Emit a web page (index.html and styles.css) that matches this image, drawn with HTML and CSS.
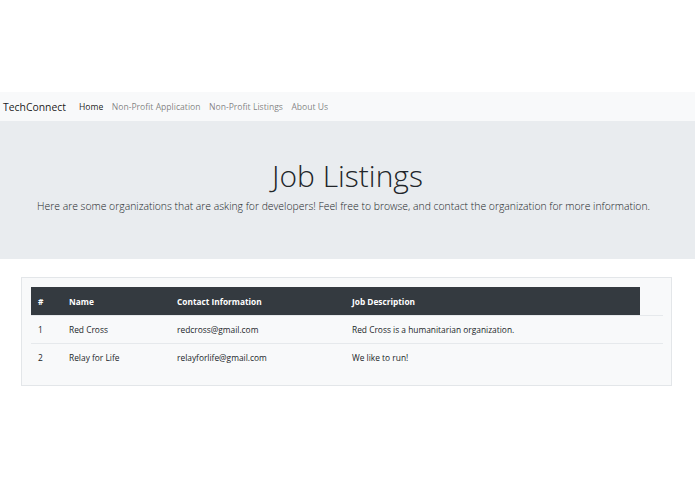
FILE: index.html
```html
<!DOCTYPE html>
<html lang="en">
<head>
<meta charset="utf-8">
<title>TechConnect - Job Listings</title>
<link rel="stylesheet" href="styles.css">
</head>
<body>
<nav class="navbar">
  <a class="brand" href="#">TechConnect</a>
  <ul class="nav-links">
    <li><a class="nav-link active" href="#">Home</a></li>
    <li><a class="nav-link" href="#">Non-Profit Application</a></li>
    <li><a class="nav-link" href="#">Non-Profit Listings</a></li>
    <li><a class="nav-link" href="#">About Us</a></li>
  </ul>
</nav>
<header class="jumbotron">
  <h1 class="title">Job Listings</h1>
  <p class="lead">Here are some organizations that are asking for developers! Feel free to browse, and contact the organization for more information.</p>
</header>
<main class="card">
  <table class="listings">
    <colgroup>
      <col class="c-num"><col class="c-name"><col class="c-contact"><col class="c-desc"><col class="c-extra">
    </colgroup>
    <thead>
      <tr><th>#</th><th>Name</th><th>Contact Information</th><th>Job Description</th></tr>
    </thead>
    <tbody>
      <tr><td>1</td><td>Red Cross</td><td>redcross@gmail.com</td><td>Red Cross is a humanitarian organization.</td><td></td></tr>
      <tr><td>2</td><td>Relay for Life</td><td>relayforlife@gmail.com</td><td>We like to run!</td><td></td></tr>
    </tbody>
  </table>
</main>
</body>
</html>
```
FILE: styles.css
```css
html, body {
  margin: 0;
  padding: 0;
  background: #ffffff;
}
body {
  font-family: "Open Sans", "Noto Sans", "Liberation Sans", sans-serif;
  color: #212529;
  padding-top: 92px;
}
a { text-decoration: none; }

.navbar {
  display: flex;
  align-items: center;
  height: 29px;
  background: #f8f9fa;
  padding-left: 3px;
  line-height: 14px;
}
.brand {
  font-size: 10.4px;
  color: rgba(0, 0, 0, 0.9);
  margin-right: 13px;
}
.nav-links {
  display: flex;
  align-items: center;
  gap: 8.5px;
  list-style: none;
  margin: 0;
  padding: 0;
}
.nav-links li {
  display: flex;
  align-items: center;
}
.nav-link {
  font-size: 8.6px;
  color: rgba(0, 0, 0, 0.5);
}
.nav-link.active {
  color: rgba(0, 0, 0, 0.9);
}

.jumbotron {
  background: #e9ecef;
  height: 138px;
  box-sizing: border-box;
  padding-top: 36px;
  text-align: center;
}
.title {
  margin: 0;
  font-size: 30px;
  font-weight: 300;
  line-height: 38px;
  color: #212529;
}
.lead {
  margin: 3px 0 0;
  padding-right: 8px;
  font-size: 10.4px;
  font-weight: 300;
  line-height: 16px;
  color: #212529;
}

.card {
  display: block;
  margin: 18px 0 0 21px;
  width: 651px;
  height: 109px;
  box-sizing: border-box;
  border: 1px solid #e3e6e9;
  background: #f8f9fa;
  padding: 9px 8px 0 9px;
}
.listings {
  width: 632px;
  border-collapse: collapse;
  table-layout: fixed;
  font-size: 8.4px;
}
.c-num { width: 31px; }
.c-name { width: 108px; }
.c-contact { width: 175px; }
.c-desc { width: 295px; }
.c-extra { width: 23px; }
.listings th,
.listings td {
  text-align: left;
  padding: 0 7px;
  white-space: nowrap;
}
.listings th {
  background: #343a40;
  color: #ffffff;
  font-weight: 700;
  font-size: 8.3px;
  height: 28px;
}
.listings td {
  height: 27px;
  border-top: 1px solid #e6e9ec;
  color: #212529;
}
```
